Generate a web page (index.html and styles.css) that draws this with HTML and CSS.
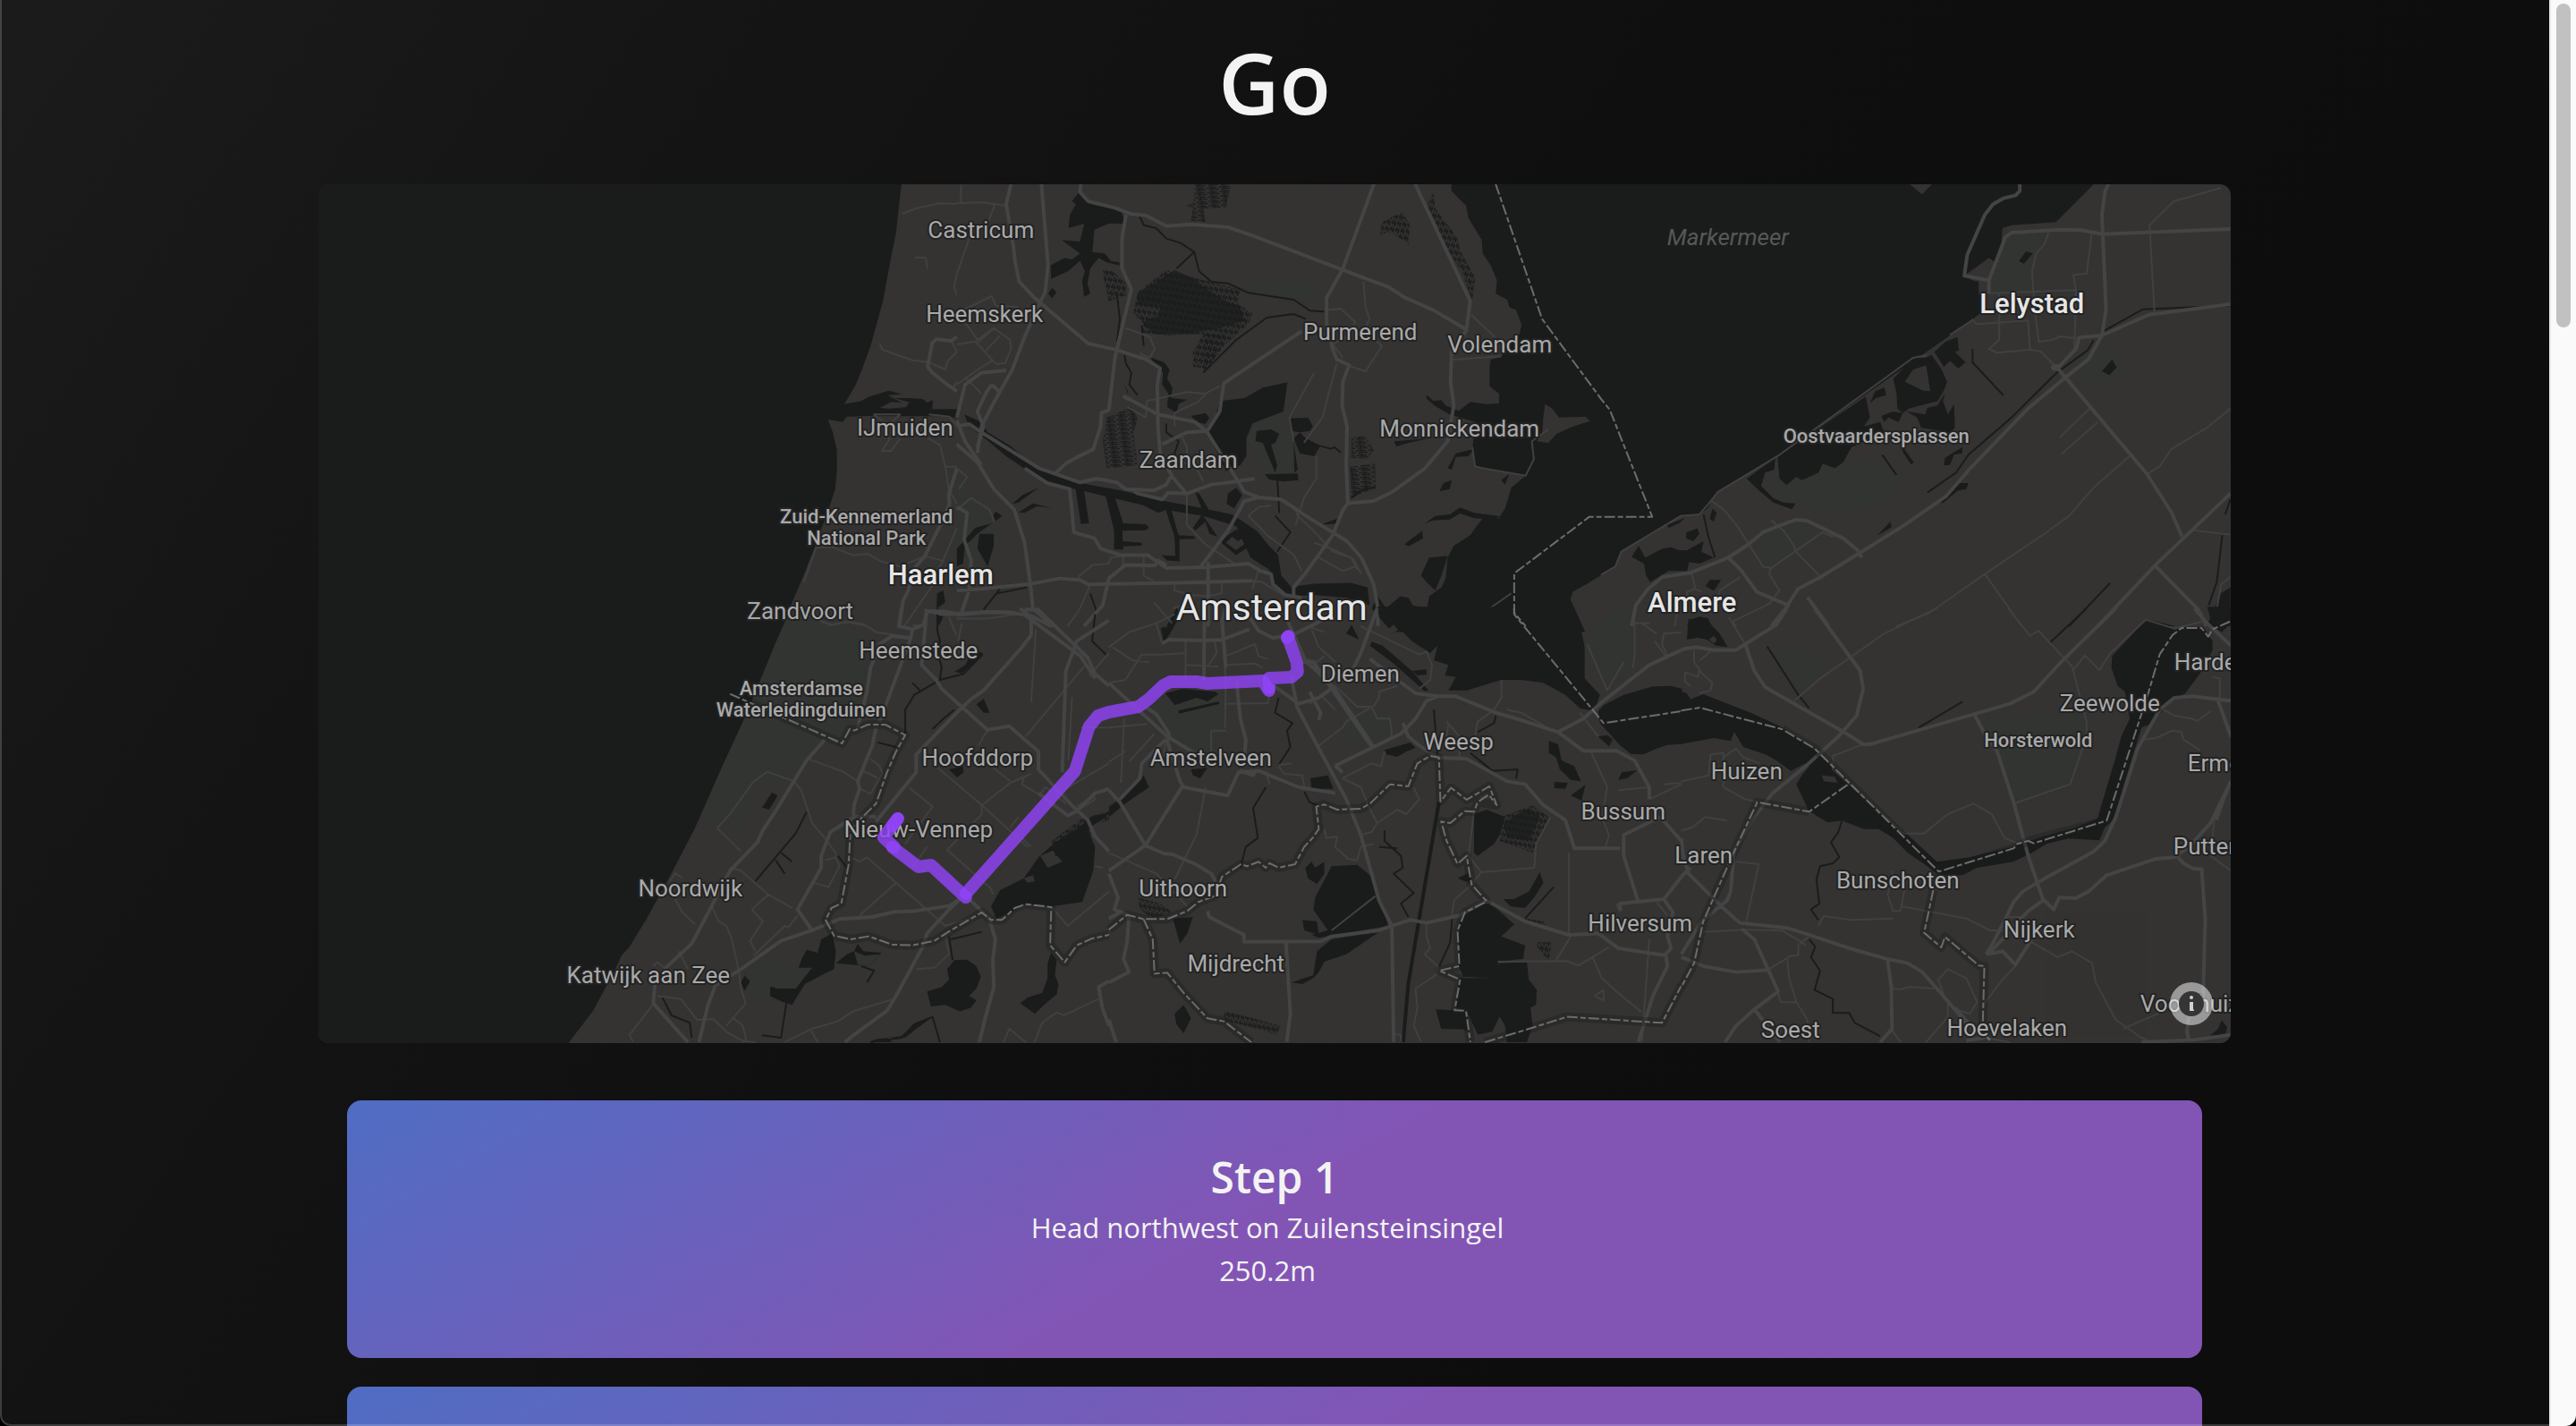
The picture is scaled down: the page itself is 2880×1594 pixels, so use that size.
FILE: index.html
```html
<!DOCTYPE html>
<html lang="en">
<head>
<meta charset="utf-8">
<title>Go</title>
<link rel="stylesheet" href="styles.css">
</head>
<body>
<div class="window">
<main class="page">
  <h1 class="title">Go</h1>
  <section class="map" aria-label="Route map">
    <svg class="map-canvas" viewBox="0 0 2138 960" preserveAspectRatio="xMidYMid slice" role="img" aria-label="Route from Nieuw-Vennep to Amsterdam">
      <defs>
        <pattern id="peat" width="13" height="22" patternUnits="userSpaceOnUse" patternTransform="rotate(12)">
          <path class="peat-line" d="M3 0V17M9 5V22M0 11H8"/>
        </pattern>
        <pattern id="peat-flat" width="30" height="15" patternUnits="userSpaceOnUse" patternTransform="rotate(-6)">
          <path class="peat-line" d="M0 4H26M6 11H30M14 0V9"/>
        </pattern>
      </defs>

      <!-- parks and dunes -->
      <g transform="translate(244 474) scale(.4082 .3333)" class="park">
        <path d="M690 0L820 40 915 90 905 230 890 390 838 450 790 435 740 510 690 570 600 600 560 760 470 700 433 740 505 540 575 355z"/>
        <path d="M560 1210L640 1180 700 1200 660 1310 590 1330z"/>
      </g>
      <g transform="translate(714 -6) scale(.4592 .3333)" class="park">
        <path d="M720 820L790 800 820 880 830 990 780 1000 740 960 710 900z"/>
        <path d="M700 350L860 330 880 400 830 410 710 385zM0 960L60 1100 110 1200 60 1280 0 1250z"/>
      </g>
      <g transform="translate(1434 -6) scale(.4592 .3333)" class="park">
        <path d="M990 185L1090 180 1060 250 1050 375 950 378 945 330zM420 960L640 940 740 1000 700 1100 520 1120 420 1060z"/>
        <path d="M1160 600L1250 560 1290 660 1180 700zM380 1190L470 1150 560 1190 470 1260 400 1300z"/>
      </g>
      <g transform="translate(884 474) scale(.4082 .3333)" class="park">
        <path d="M110 300L310 280 310 400 280 480 160 440zM640 340L760 350 780 440 700 470 640 430zM1380 0L1440 20 1440 180 1370 270 1300 120z"/>
      </g>
      <g transform="translate(1524 474) scale(.4082 .3333)" class="park">
        <path d="M820 370L1110 350 1110 430 1060 600 920 650 860 480zM250 150L330 120 400 200 330 290z"/>
      </g>

      <!-- north-west -->
      <g transform="translate(-6 -6) scale(.4592 .3333)">
        <path class="water" d="M0 0H1435L1433 18 1420 180 1404 290 1388 410 1358 560 1335 645 1322 690 1294 755 1335 745 1355 730 1402 710 1435 722 1400 725 1412 735 1450 735 1485 738 1495 750 1510 742 1508 772 1570 772V802L1520 796 1350 795 1300 797 1290 815 1254 807 1266 850 1276 910 1276 980 1272 1040 1255 1110 1222 1235 1195 1330 1167 1420 1140 1510H0z"/>
        <path class="land" d="M1408 748L1450 752 1445 765 1405 770 1380 768zM1410 733L1455 750 1440 755z"/>
        <path class="water" d="M1520 1390L1535 1380 1540 1420 1520 1440 1540 1450 1525 1500 1518 1460z"/>
        <path class="r2" d="M1435 117L1468 99 1525 82 1568 84M1466 264H1492L1497 302M1380 552L1387 573 1460 608 1498 614 1540 639 1545 612 1568 580M1568 320L1561 362 1568 390M1555 545L1568 580M1568 680L1560 700M1365 790L1400 825 1430 790H1365M1500 790L1550 797 1568 830M1385 912L1405 872 1390 845M1385 912H1408L1430 870M1497 868L1527 893 1540 965 1548 1040M1548 1040L1568 1090M1540 965H1568M1195 1353L1225 1237 1265 1235 1315 1262 1350 1257 1380 1281 1430 1300 1490 1265 1532 1280M1568 1170L1533 1285 1520 1310M1510 1360L1490 1400 1440 1500M1460 1497H1495L1490 1440M1235 1480L1260 1497 1300 1485 1350 1500"/>
        <path class="r1" d="M1568 530L1555 543 1518 538 1508 550 1497 630 1508 650 1545 690 1568 712M1568 970L1548 1060 1550 1090 1530 1155 1490 1265 1462 1310 1450 1380 1437 1415 1428 1500M1568 1460H1530L1495 1448 1490 1500"/>
      </g>

      <!-- north -->
      <g transform="translate(714 -6) scale(.4592 .3333)">
        <path class="water" d="M1204 0V40L1240 90 1245 130 1278 205 1280 250 1300 290 1315 340 1312 385 1340 405 1345 430 1362 440 1375 490 1370 520 1345 555 1325 598 1300 605 1297 630V695L1320 720V752L1290 755 1250 748 1222 778 1190 760 1180 742 1160 745 1145 725 1142 735 1165 762 1200 790 1262 815 1256 900 1262 960 1300 975 1385 995 1350 1035 1335 1105 1318 1140 1280 1140 1265 1165 1250 1195 1210 1230 1195 1270 1190 1340 1180 1370 1150 1400 1145 1440 1110 1430 1100 1405 1080 1400 1045 1440 1025 1400 1010 1440 1060 1520H1530L1494 1410 1500 1385 1575 1325V0z"/>
        <path class="land" d="M1432 755L1448 768 1466 800 1530 797 1542 812 1500 830 1460 855 1440 885 1412 880 1425 850 1428 800z"/>
        <path class="water" d="M300 40L330 85 400 105 410 150 370 150 335 170 330 245 360 250 375 275 396 280V290L365 280 345 265 325 300 318 350 325 385 310 395 305 340 312 310 300 275 270 310 230 335 228 290 262 265 280 270 300 250 275 225 255 205 300 210 310 150 272 165 275 120 290 85 280 75zM232 365L243 380 232 400 222 385z"/>
        <path class="water" d="M470 598L505 615 518 640 512 670 525 700 522 735 560 740 540 755 535 785 512 765 515 720 500 690 502 650zM570 795L605 785 615 800 605 822 585 815zM640 745L700 735 745 700 805 682 795 780 720 820 705 870 705 930 690 960 655 980 610 850 625 825zM730 845L765 840 785 855 775 885 765 890 780 960 775 985 745 885 727 880zM810 803L855 800 867 830 860 845 835 850 850 870 885 895 870 930 835 920 820 870 835 850 815 845zM750 990L830 988 832 1010 795 1015 760 1008zM820 885L830 975 822 985z"/>
        <path class="water" d="M18 790L60 815 75 850 130 895 185 960 240 990 300 1020 400 1045 505 1080 600 1105 670 1125 730 1180 760 1230 782 1260 790 1330 820 1378 830 1365 870 1358 960 1355 1000 1370 1005 1430 950 1405 870 1395 820 1400 780 1385 760 1310 715 1270 680 1165 600 1130 510 1110 490 1120 455 1095 380 1070 290 1040 230 1025 185 990 120 930 60 860 30 830z"/>
        <path class="water" d="M288 1030H308L322 1155 302 1157zM360 1050L382 1055 405 1155 460 1158 468 1170 460 1178 403 1180 404 1215 450 1220V1230L405 1232V1243H383V1180zM505 1095L520 1100 540 1195 578 1198 580 1207 542 1208V1283L512 1280 498 1262 532 1265 530 1200zM580 1050L590 1055 612 1105 600 1130 635 1200 615 1190 605 1150 580 1180 575 1170 600 1120zM680 1035L695 1060 675 1105 657 1090 660 1055zM640 1215L680 1175 705 1195 685 1215 670 1200 655 1220 680 1245 710 1215 720 1225 680 1262z"/>
        <path class="water" d="M55 1190H90V1230L75 1300 65 1275 50 1240zM85 1155L45 1170 20 1210 0 1240V1300L15 1290 20 1230 50 1190zM95 1115L110 1130 92 1150 85 1135zM150 1118L185 1088 230 1103 195 1098 165 1120zM200 1035L160 1060 135 1090 150 1085zM1140 1155L1165 1130 1200 1125 1225 1102 1260 1120 1320 1130 1315 1143 1260 1138 1225 1122 1200 1142 1160 1145zM1133 1180L1135 1205 1100 1232 1090 1225zM1195 1265L1180 1330 1165 1380 1145 1355 1130 1330 1150 1270zM1205 1010L1200 1040 1175 1048 1185 1020zM1345 990L1335 1025 1325 1010zM1260 905L1245 930 1215 932 1205 975 1195 970 1215 920zM1065 880L1150 870 1100 885 1070 898zM885 1160L925 1140 930 1155zM535 1440L545 1460 525 1500 510 1500z"/>
        <path class="peat" d="M440 380L510 305 600 340 690 370 685 420 720 450 710 485 650 560 600 650 605 520 520 525 450 515 455 485 430 450z"/>
        <path class="water-soft" d="M440 385L530 305 570 330 640 400 690 430 700 475 640 500 560 520 480 520 450 480 490 460 495 430 440 420z"/>
        <path class="peat-flat" d="M580 18H668L655 95 600 100 605 145 570 140 575 95 555 92 575 80zM365 800L425 765 440 800 430 850 440 960 365 970 355 880zM960 870L995 860 1015 910 1000 940 960 935zM957 965L1018 955 1020 1035 960 1070z"/>
        <path class="peat" d="M1160 40L1145 90 1180 210 1230 310 1255 410 1262 330 1225 240 1220 200 1165 100zM1035 145L1085 110 1103 155 1100 220 1060 180 1030 185zM355 305L380 310 412 350 412 390 370 410 360 350zM405 680L420 720 445 725 415 720zM575 580V630L610 635 640 580 655 520 600 520z"/>
        <path class="creek" d="M445 125L455 155 485 165 510 200 545 215 578 245 590 310 620 345 660 350 710 382 820 405 860 442 895 445M578 245L535 300M600 650L680 540 755 465 820 453 850 470M390 390L397 470 390 545M408 590L412 620 425 650 420 690 440 725M450 490L455 560M510 820V850L540 880 530 920 545 960M870 890L910 905 920 900 935 918M775 1130L812 1185 780 1250M325 1390L340 1450M170 1370L100 1390M65 1445L105 1375M780 1000L785 1120M960 1070L990 1040 1020 1035"/>
        <path class="r2" d="M0 82L60 78 120 90M92 88L78 140M30 200L0 320M10 20V80M0 450L45 420 85 393 95 425 150 430M0 470L25 490 50 540 90 500 130 540 132 570 118 618 95 620 68 580 45 545M0 555L45 545M0 690L50 640 85 610M68 580L105 525M20 665L60 720M90 500L50 550M410 500L470 530 482 570 470 600 445 585M820 1095L830 1130 865 1175 915 1250 960 1270 975 1310M990 345L995 430 1005 470 990 510 1035 560 995 645 950 625M895 440L935 435 970 480 950 530 915 555 940 600M1205 607L1270 600 1325 595M1252 455L1310 530M463 745L560 715 605 720 640 695M463 745L460 800M460 800L415 765M605 722L590 745 530 785 530 830M505 890L545 855 560 900 560 950M555 955L580 960 600 1015M870 650L810 800 820 880M925 618L890 800 845 885M875 930V1005L845 1070 825 1160M710 1130L735 1100 765 1095M710 1130L760 1200 790 1230 820 1260 840 1315M875 1265L940 1315 970 1300M870 1220L920 1245 965 1275 985 1325M0 970L25 1000 5 1040M0 1110L35 1070 80 1110 92 1150M295 1335L330 1295 370 1290 375 1270 400 1265M405 1265V1295M455 1265V1330L480 1350M560 1060V1160L605 1225 680 1295M530 1355V1380L570 1395 610 1400 645 1390V1350M575 1395V1420L525 1440M735 1310L720 1375M690 1350H740L800 1400M325 1360L300 1440 270 1500M0 1475H70L150 1460M480 1420L530 1500M1235 1500L1350 1390M1440 840L1400 880 1405 940 1385 995 1300 975 1262 965 1255 900"/>
        <path class="r1" d="M303 0L300 45 320 75 385 97 425 118 460 122 510 158 570 152 660 162 720 190 935 303 1050 362 1090 397 1160 440 1240 505M205 0L222 290 215 380 203 412 165 530 135 640 90 750 60 830 50 920M132 18L120 85 137 220 142 280 152 345 190 400 320 552 385 572 460 605 495 635 488 690 490 840 495 920 525 1000 550 1040 560 1060M412 120L402 200V300L425 370 402 500 385 600 370 775 352 785 350 830 332 907 290 935 265 955 240 988M1020 0L940 300 900 400V480L915 570 925 605 955 625 940 680 938 760 950 830 948 960 952 1085M1110 0L1250 410 1240 510 1205 570 1202 680 1210 760 1195 880 1140 970 1060 1050 1015 1080 952 1088 940 1110 915 1195 850 1320 820 1370V1400M0 800L20 690 60 650 120 642M85 690L105 715M85 690L70 720 50 780 65 830 50 900M0 830L30 822 60 850 200 970 300 1018 340 1005 390 1018 410 1040 480 1045 510 1025 520 1000M430 1045L440 1055 500 1075 515 1052 560 1055 620 1025 680 1015 725 1005M405 728L490 790 580 815 610 850 685 1015 700 1050 735 1068 790 1075 850 1130 950 1215 985 1270 1015 1360 1025 1440 1025 1500M840 510L650 685 640 780 610 845 560 850 500 890M735 1068L700 1080 660 1180 605 1280 590 1305M0 890L50 950 90 1040 140 1110 165 1220 180 1370 185 1440 235 1500M60 960L20 880 0 810M165 970L220 1020 275 1040 285 1185 335 1205 350 1240 400 1262 465 1262 510 1305 610 1302 710 1290 740 1315 765 1325 770 1360 800 1395 840 1405M480 1300L490 1280 510 1295M0 1380L60 1375 180 1358 250 1340 300 1345 320 1360 530 1355 720 1348M310 1500L355 1430 370 1340 410 1295 480 1297M612 1285V1500M0 1100L25 1120 18 1210 35 1280 30 1380 10 1460M0 1462L65 1452 135 1455 180 1465 230 1500M165 1445H200"/>
      </g>

      <!-- north-east -->
      <g transform="translate(1434 -6) scale(.4592 .3333)">
        <path class="water" d="M-2 0H1210L1200 18 1108 145 1000 155 978 165 975 215 960 280 945 265 885 325 905 340 920 345V385L930 400 925 450 850 525 430 930 285 1050 270 1080 260 1105 240 1125 195 1130 50 1250 35 1300-2 1327z"/>
        <path class="land" d="M752 18H806L782 52z"/>
        <path class="water" d="M1035 243L1052 250 1030 285 1018 275zM868 530L872 575 862 580 888 615 870 635 850 610 835 630 812 580 840 545zM1245 605L1256 632 1238 658 1220 645zM805 590L830 640 843 680 835 710 820 745 750 770 735 785 722 770 720 720 712 670 730 645 755 600 790 600zM690 700L695 725 670 735 655 752 668 712zM735 785L725 815 700 800 690 815 683 795 710 780zM838 718L833 745 845 790 860 755 862 835 850 850 780 835 770 800 745 780 790 790 795 768 820 760zM645 730L655 800 640 830 680 815 690 850 610 900 590 950 570 970 540 955 530 985 490 1010 475 1000 452 1027 435 1005 430 930zM425 935L422 975 400 985 390 1030 420 1070 445 1085 474 1088 465 1108 420 1085 385 1045 355 1005zM730 890L762 950 755 958 735 915zM880 900V920L860 925 850 960 835 960 838 935zM895 1020L890 1040 870 1045 830 1090 828 1075 870 1020zM272 1105L282 1120 275 1150 265 1140zM205 1137L190 1155 165 1170 160 1160zM235 1172L240 1190 225 1215 208 1205V1185zM92 1230L108 1270 150 1240 170 1235 190 1245 210 1245 250 1215 245 1250 275 1270 240 1290 215 1285 210 1315 165 1315 120 1352 110 1330 105 1290 75 1268zM705 1150L708 1168 672 1197zM293 1345L275 1382 255 1365 265 1345zM215 1480L240 1468 262 1475 265 1500H210zM1533 1370L1510 1390 1475 1500H1533zM1310 1500L1330 1477 1400 1500z"/>
        <path class="land" d="M792 625L802 712 785 710 740 680 760 640z"/>
        <path class="creek" d="M905 570V615L980 726M685 925L720 993M1200 540L1185 575 1110 650 1000 800 895 925 865 985 795 1052M1225 510L1320 437 1533 425M250 1125L262 1200 278 1270M1240 1355L1140 1500M1513 1195L1500 1350 1480 1430M1533 1075L1520 1125"/>
        <path class="r2" d="M1510 30L1395 75 1336 155 1348 450M1090 180L1080 220 1060 250 1050 310 1053 378 1060 480 1067 550M1195 185L1183 318 1150 322 1157 375 1153 580M945 383L1155 373M970 383V540L945 570 965 583 1045 572 1040 475 915 487 903 470M1067 545L1100 540 1118 528 1160 535M1045 572L1070 578 1108 630M903 475L850 523M795 590L760 600 430 930 285 1050 265 1085 240 1125 195 1130 50 1250 35 1300 0 1328M1190 770L1117 867M1210 815L1122 922M1533 770L1475 835 1390 905 1360 965 1330 990M1287 930L1200 1035 1140 1130 1085 1185 935 1325 800 1455 720 1500M935 1325L1025 1500M1440 1178L1533 1193M1533 1335L1510 1360 1500 1440M270 1080L300 1110 335 1170 395 1300 415 1305 410 1325 435 1380 410 1425 320 1485 330 1500M415 1145L445 1180 470 1230 475 1250 500 1285 540 1342M410 1310L540 1185 565 1200M222 1325L230 1375 245 1385M340 1335L290 1380 285 1410M80 1490H120M185 1460L180 1500M210 1420V1385L230 1375"/>
        <path class="r1" d="M1020 0V40L1010 55 980 65 955 85 935 120 892 255 885 325 945 340M945 385V340L985 195 1000 180 1120 170 1170 172 1220 185 1533 168M1242 0L1228 40 1220 120 1230 440 1220 525 1187 605 1132 665 1040 770 900 970 840 1065 740 1160 630 1255 535 1335 480 1375 450 1440 415 1500M1533 420L1335 455 1220 525 1165 532 1157 570 1112 635 1195 770 1330 990 1390 1120 1415 1200M1533 1055L1350 1295 1210 1500M1350 1298L1455 1445 1475 1500M75 1500L85 1430 115 1375 150 1335 220 1320 310 1270 355 1230 395 1185 440 1160 475 1143 500 1145 590 1205 625 1245 635 1270M310 1270L340 1310 380 1385 460 1432M503 1403L555 1500"/>
        <circle class="junction" cx="1108" cy="632" r="12"/>
      </g>

      <!-- south-west -->
      <g transform="translate(244 474) scale(.4082 .3333)">
        <path class="water" d="M-620-4H695L683 38 650 130 575 355 505 540 433 740 365 900 300 1045 255 1135 233 1165 210 1225 155 1350 80 1470H-620z"/>
        <path class="water" d="M645 617L661 628 637 675 618 668zM1225 303L1241 350 1225 350 1205 322zM1130 540L1168 530 1170 550 1152 567zM1222 160L1165 218 1145 212 1175 190 1185 165 1210 145 1222 150zM810 1090L820 1150 815 1210 790 1225 735 1260 700 1330 670 1318 640 1300 640 1270 700 1270 725 1180 740 1145 770 1155 780 1110zM880 1125L895 1150 945 1155 910 1200 820 1190 850 1160 870 1150zM570 1232L585 1250 570 1283 560 1255zM1125 1210L1145 1180 1180 1178 1205 1200 1217 1235 1205 1275 1185 1300 1205 1315 1190 1340 1160 1352 1120 1330 1080 1335 1070 1285 1110 1270 1130 1245zM1410 1155L1425 1180 1420 1230 1430 1260 1425 1295 1395 1325 1365 1360 1325 1325 1345 1305 1385 1290 1400 1240 1400 1190zM1568 685L1520 700 1485 735 1420 785 1375 835 1335 905 1270 945 1245 1000 1260 1040 1300 1020 1340 990 1410 1000 1495 985 1525 880 1530 800 1510 740 1568 690z"/>
        <path class="land" d="M1380 830L1415 812 1440 850 1400 870zM1335 905L1360 895 1365 915 1345 920z"/>
        <path class="park" d="M755 1205L700 1205 640 1250 655 1275 710 1275zM870 1150L900 1165 940 1160 910 1200 880 1195z"/>
        <path class="peat" d="M1410 780L1500 700 1520 730 1510 830 1420 830zM1510 700L1568 680V715L1520 720z"/>
        <path class="creek" d="M1098 20V75L1105 110 1100 160 1110 195 1105 240 1035 290 1010 340V420M1145 340L1115 370 1085 405M1030 250L1050 275M1222 155L1170 220 1105 240M740 683L710 755 600 915M670 820L700 850M655 845L680 890M935 450L985 465M1220 1085L1135 1110M1130 1100L1140 1180M890 1200L925 1215 905 1255M685 1320L670 1440 618 1432M820 820L850 870M345 1305L370 1365 420 1390 425 1440M915 1455L1000 1440 1035 1395 1085 1370 1105 1455M1530 20L1522 110 1560 155"/>
        <path class="water" d="M960 1440L975 1455H910L930 1445 1000 1435 1040 1390 1080 1375 1040 1410 1010 1440z"/>
        <path class="r2" d="M780 45L810 55 860 45 900 55 930 80 975 88M1150 90L1130 30M1165 50L1155 110M1120 15L1300 10M745 505L840 548 880 580M915 505L940 530 948 555 915 622 885 605M895 545L935 570M495 737L530 690 595 580 632 548 705 580 725 610 755 720 790 770 825 830M495 737L560 815M1095 530L1220 660 1345 800M1020 600L1085 665 1010 790M1210 460L1230 420 1240 410M1220 660V690L1125 810 1245 940 1250 960M1355 555L1298 585 1220 660M1225 510L1298 580M905 835L985 920 1120 1065M985 920L885 1030M905 835L885 850 870 840 850 845M1070 800L1030 870M1298 735L1320 700M1355 800L1330 770M365 915L380 888 400 905M380 975L400 1020 435 1060M530 870L560 880 635 960 700 1005M635 960L590 1010 620 1050 585 1115 600 1150M555 1220L535 1110 520 1065 500 1050 480 1000M390 1150L415 1210M320 1200L330 1187 360 1215M715 1030L690 1070 680 1065 595 1165M790 845L820 835 830 865 800 935 760 920M1490 400H1568M1355 315L1368 70M1340 430L1500 195M1568 150L1515 225M1457 510L1467 300M1450 605L1568 520M1335 565L1330 590 1378 625M1378 625L1395 600 1450 655M1480 680L1530 640 1525 630 1480 665M1550 870L1530 865M555 1220L560 1275 573 1325 520 1400M330 1300L395 1310 440 1380 485 1378 520 1420 570 1455M325 1320L255 1430 265 1455M560 1450L600 1455M750 1410L770 1455M680 1455L755 1410 825 1385 870 1350 980 1310M540 1375L565 1400 575 1450M1040 1210L1090 1205 1130 1160 1120 1095M1120 1065L1190 1040M1410 1000L1455 1065 1568 950M1365 1455L1385 1390 1425 1355 1445 1365 1540 1310M1280 1455L1295 1410 1340 1455"/>
        <path class="r1" d="M1000 0L992 60 1030 70 1060 55 1070 10 1110 10 1160 20 1250 12 1310 15M1065 60L1055 190 1095 240 1110 270 1235 407 1295 395 1375 480V540L1420 600 1470 665 1510 710 1530 765 1568 815M1030 70L1025 100 940 380M1025 100L975 92 940 120 915 200 905 280 880 400M930 400L920 460 880 580 885 605 870 660 868 695M790 440L740 510 650 690 620 745 605 785 530 880 475 1010 425 1125 350 1210M325 1250L320 1325 415 1455M1325 0L1355 30V90L1330 130 1225 275 1190 305 1155 345 1040 490V550L930 715M1370 0L1510 165 1530 220 1568 260M1568 40L1480 110 1450 210 1440 550M1335 20L1490 160 1530 235M930 700L900 695 870 700 805 750 780 830 780 870 715 1010 755 1080M445 1455L470 1330 490 1265 560 1210 670 1115 755 1080 830 1042 920 1035 980 1018 1030 1016 1130 998 1160 975M845 1455L870 1430 960 1350 985 1300 1025 1210 1060 1130 1070 1090 1130 1010 1160 975M1185 975L1240 1040 1257 1110 1250 1180 1253 1270 1230 1370 1213 1455M1568 1250L1540 1270 1550 1340 1568 1400M1568 605L1530 620 1480 680 1455 695 1375 620"/>
        <path class="border-shade" d="M530 287L837 453 858 405 870 410 908 390H955L1010 425 985 480 960 550 930 655 893 700 860 745 855 860 835 990 808 1005 792 1045 815 1098 860 1110 910 1100 975 1128 1030 1130 1090 1115 1135 1080 1220 1020 1245 1045 1275 1045 1310 1005 1340 992 1410 1002 1407 1130 1447 1187 1480 1130 1520 1108 1568 1095"/>
        <path class="border" d="M530 287L837 453 858 405 870 410 908 390H955L1010 425 985 480 960 550 930 655 893 700 860 745 855 860 835 990 808 1005 792 1045 815 1098 860 1110 910 1100 975 1128 1030 1130 1090 1115 1135 1080 1220 1020 1245 1045 1275 1045 1310 1005 1340 992 1410 1002 1407 1130 1447 1187 1480 1130 1520 1108 1568 1095"/>
      </g>

      <!-- south -->
      <g transform="translate(884 474) scale(.4082 .3333)">
        <path class="water" d="M735-5L740 30 780 85 790 60 830 110 880 150 900 125 890 175 930 190 920 225 950 230 930 275 980 275 1020 260 1075 240 1130 240 1190 250 1250 290 1290 335 1330 345 1345 290 1303 235V130L1290 50 1272-5zM1355 325L1410 290 1490 262 1540 260 1570 270V455L1530 458 1500 470 1465 490 1430 488 1400 460 1345 385 1340 345z"/>
        <path class="land" d="M765 70L780 55 792 72 775 88z"/>
        <path class="water" d="M200 15L165 90 150 115 142 65 170 60 185 0zM665 55L685 105 650 85zM720 112L750 125 830 210 875 275 865 278 780 185 715 125zM830 210L870 205V222L845 225zM155 285L200 270 290 280 300 288 270 312 240 300 180 325zM190 343L300 313 303 320 192 353zM755 475L825 450 840 468 815 480 790 498 760 490zM1205 445L1230 455 1240 510 1275 530 1293 580 1265 575 1235 540 1225 500 1205 485zM1220 582L1257 585 1250 605 1220 603zM1305 592L1295 645 1265 628zM1395 575L1405 550 1447 543 1420 570zM1340 430L1365 425 1380 440 1370 463zM552 570L600 560 615 605 555 605zM225 540L270 535 250 570 230 560zM95 560L110 600 50 650 0 700V665L30 640z"/>
        <path class="water" d="M555 850L565 870 590 850 590 890 570 925 545 905 538 870zM610 865L680 860 725 905 765 1065 600 1100 575 1105 555 1095 600 1080 560 1010 565 970zM530 1045L570 1050 575 1095 535 1080zM740 1085L650 1160 590 1185 575 1220 560 1240 530 1260 500 1255 560 1230 570 1150 610 1110zM1000 690L1035 675 1085 700 1070 760 1055 790 1010 830 1000 820V760zM975 1010L1035 985 1060 1005 1110 1060 1075 1100 1140 1130 1135 1175 1070 1185 1050 1240 970 1235 955 1190 960 1050zM960 1240L1045 1240 1070 1190 1145 1185 1150 1245 1172 1280 1170 1330 1155 1340 1160 1400 1145 1455 1090 1455 1085 1400 1070 1370 1050 1420 1010 1430 980 1350 950 1340zM895 1345L980 1350 985 1420 970 1412 910 1410zM1180 885L1190 920 1165 970 1140 1005 1100 1000 1080 975 1110 975 1150 950zM205 1330L225 1375 205 1425 185 1395 180 1360zM175 1040L230 1035 215 1090 195 1125zM990 885L995 925 955 905z"/>
        <path class="peat" d="M1075 700L1160 660 1205 700 1160 820 1070 780zM80 970L140 990 175 1020 120 1040 85 1010zM320 1350L470 1400 460 1430 360 1395 310 1380zM1170 1120H1212L1205 1180 1175 1140zM1140 1040L1190 1050 1195 1065 1150 1060z"/>
        <path class="water-soft" d="M1080 720L1150 670 1180 700 1150 780 1090 770z"/>
        <path class="creek" d="M465 300L455 350 503 385 488 410 497 465 465 525M430 600L395 670 408 770 375 800 360 870M890 340L900 490M1060 360L1055 385 1010 415M1050 545L1120 540 1115 570M990 485L1020 515 1050 545M755 745V780L800 830 805 870 780 890 835 955 800 990 820 1035M600 1085L730 960M1218 935L1140 1040M535 615L550 650 570 660M940 1040L935 1120 905 1200M740 800L790 805"/>
        <path class="canal" d="M904 650L850 1040 820 1260 806 1455"/>
        <path class="r2" d="M0 130L55 80 130 50 145 115M130 50L180 20M0 250L45 240 90 155 145 155 210 150M10 130L65 175 110 180M210 110V190L300 195M315 110L320 250 318 400M210 240V190M320 160L400 120 410 160 435 170M290 110L295 150 270 195M320 190L400 185 420 200M320 320L435 318 440 290M280 410H320M280 410V490M0 400L105 388M42 370L33 585M0 515L45 480M55 515L125 420M155 440L150 500M555 70L575 130 620 180M590 80L555 65M540 170L570 180 590 160M550 320L580 290 620 340M0 820L130 890 215 1000M265 600L240 760 180 910M500 520L465 525M465 530L480 555 530 560 535 600M430 545L440 590M690 60L850 155 870 145 885 190 880 240 850 270M620 260L680 330 720 330 735 370 770 370 775 420 770 440M725 330L740 300 740 280 790 260M570 465L640 400 650 380 715 335M640 570L720 520 745 530 755 480M640 570L690 600 710 660 735 720 720 750 690 760M735 720L790 675 815 690 850 640 835 600M925 380L960 430M925 430L930 385M960 430V500M1055 340L1010 380 1000 450M1075 240V300L1055 340M1090 340L1130 350 1200 400M1410 180L1365 275M1310 120L1365 275M1320 480L1365 600 1350 700 1370 760 1360 800M1395 610L1480 600M1520 590L1568 585M1480 640L1568 590M1210 700L1170 790 1165 870 1020 885M1000 680L985 830 1020 885 990 930 945 980 940 1030M1260 820V1090M1265 1100L1225 1180M1065 1185L1255 1183 1285 1198 1325 1170 1370 1135M1325 1170L1350 1240 1395 1290 1460 1355M1480 1110L1460 1455M870 1060L870 1100 880 1140 865 1160 900 1200 895 1230 840 1275 845 1340 835 1400 855 1455M780 1430H800V1455M1330 1300L1355 1280V1315L1330 1300M590 740L595 770 625 765 620 800 655 840 680 845 690 800 725 790M1400 1015L1390 990M1440 40V160L1435 200M1495 110L1525 160M1568 80L1520 85 1515 120 1530 160M1460 50L1500 85M1290 350L1340 430M1500 985L1530 1030M610 1080L730 965"/>
        <path class="r1" d="M145 118L165 105 260 108 310 105 385 70M262 0L260 240M320 0L310 40 320 200M385 30L410 75 450 100 510 85 560 55 600 30M735 0L690 150 670 200M485 30L540 180 560 200 615 265 725 465M435 245L520 320 575 300 620 260M500 230L515 330 575 470 650 640 690 760 740 980 775 1065 780 1455M350 250L360 370 375 440 370 530M0 250L160 430 200 460 240 490M100 330L130 355 165 420 160 445 195 580 205 600 325 628 355 550 410 545 520 600 620 620M0 610L30 650 100 795 205 590M30 640L85 570 90 520 155 440M0 880L100 795 150 822 175 825 240 860 280 890 295 920M0 890L25 970 15 1010 55 1030 50 1120 40 1175 55 1220 0 1255M270 1015L275 1035 370 1095V1118L580 1117 610 1100 740 1080 775 1065 825 1045 870 1055 960 1030 1035 980 1140 1050 1260 1095 1340 1090 1395 1140 1530 1165M485 1120L497 1360 487 1455M0 1380L20 1455M0 1040L30 1020M620 528L725 465 800 420 840 370 870 310 900 295 950 295 1060 350 1130 375 1230 415 1300 478 1390 478 1440 510 1480 600V640M715 170L790 240 840 285 900 295M1230 415L1300 370 1345 320 1480 190 1568 140M805 385L820 430 850 460 900 500 980 505 1040 545 1090 580 1140 590 1190 660 1250 710 1275 805 1400 805M1510 700L1410 760V830L1450 985M1510 700L1568 780M1400 1015V990L1520 975 1568 900M1520 975L1545 1020 1530 1100 1540 1140 1525 1160 1530 1200 1490 1300 1450 1455M640 550L620 528M360 545L395 560 400 545M550 280L580 350 575 375M530 180H560L720 465"/>
        <path class="border-shade" d="M0 1078L50 1028 95 1042 160 1042 215 1015 245 985 290 965 310 900 362 858 378 865 410 850 430 870 440 855 465 870 510 858 535 800 558 770 575 740 568 665 590 658 625 675 690 672 715 655 770 590 820 597 845 520 880 495 904 500 908 648 937 602 980 642 1042 597 1062 660 1010 650 1000 682 975 680 935 720 910 715 925 780 955 857 980 830 993 925 1035 983 975 1020 955 1080 960 1200 905 1215 962 1245 947 1348 978 1350 990 1455M95 1042L120 1110 125 1225 160 1222 205 1290 270 1375 315 1385 390 1455M1030 1455L1130 1418 1255 1370 1515 1390 1568 1265"/>
        <path class="border" d="M1110 0V20L1355 385 1568 345M0 1078L50 1028 95 1042 160 1042 215 1015 245 985 290 965 310 900 362 858 378 865 410 850 430 870 440 855 465 870 510 858 535 800 558 770 575 740 568 665 590 658 625 675 690 672 715 655 770 590 820 597 845 520 880 495 904 500 908 648 937 602 980 642 1042 597 1062 660 1040 625 1010 650 1000 682 975 680 935 720 910 715 925 780 955 857 980 830 993 925 1035 983 975 1020 955 1080 960 1200 905 1215 962 1245 947 1348 978 1350 990 1455M95 1042L120 1110 125 1225 160 1222 205 1290 270 1375 315 1385 390 1455M1030 1455L1130 1418 1255 1370 1515 1390 1568 1265"/>
      </g>

      <!-- south-east -->
      <g transform="translate(1524 474) scale(.4082 .3333)">
        <path class="water" d="M-2 278L15 285 25 305 60 288 190 350 270 395 370 480 470 600 620 760 700 850 790 835 905 800 990 765 1080 735 1140 705 1165 600 1185 520 1205 430 1228 370 1215 280 1195 260 1178 200 1180 160 1272 38 1355 68 1370 62H1430L1455 110V140L1420 220 1380 285 1330 320 1290 385 1260 400 1240 480 1210 600 1190 700 1160 735 1145 778 1060 772 1000 790 960 820 910 850 810 870 770 895H705L680 870 620 820 580 770 540 740H500L440 712 400 718 350 680 330 630 315 590 330 560 350 530 340 520 300 545 260 510 230 490 170 465 145 415 135 445 90 435-2 455zM1440-5H1505V50L1480 80 1455 60zM20 35L45 45 70 30 85 60 105 85 127 130 95 125 70 105 45 98 15 105zM1480 1382L1495 1405 1490 1430 1445 1437 1470 1410z"/>
        <path class="land" d="M385 560L420 565 428 585 390 580zM88 92L98 105 90 118 75 105z"/>
        <path class="creek" d="M235 128L320 290 350 335M770 313L650 400M1110 0L1010 115M440 712L430 750 410 785 433 835 415 855 380 865 370 910 378 990 355 1010 375 1045M350 1110L367 1135 355 1170 380 1215 365 1280 415 1310V1357H460L475 1390 545 1435"/>
        <path class="r2" d="M700 0L555 85 380 235 310 310M500 455L415 495V540L610 755 665 755 730 690 800 655 850 690 885 770 925 790M895 0L955 92 978 75 1070 195 1110 380V430L1065 590 910 655M1075 205L1105 158 1145 207 1175 150 1272 38 1350 68 1425 45M35 140V180L50 205 45 230 10 215 10 245 25 260M50 210L85 250 80 275 50 285M50 175L80 145M130 30L175 120M0 580L75 560 80 490 115 485V600L175 640 210 650M115 500L150 470 170 500 215 520M0 745L30 735 65 700 125 712M150 850L212 858 178 1050M60 1085L170 1078 275 1080 330 1120 340 1130M240 1210L300 1165H320V1130L350 1100M290 1170L295 1240 315 1320 345 1380 350 1455M375 1065L390 1032 465 1045 580 1040M605 1000L780 1040 845 1080H880M580 880L565 960 580 1015H600L612 940M265 1290L272 1320 315 1322M575 1275L600 1278 625 1270 695 1275M700 1250L730 1210 780 1240 810 1320 790 1360 750 1345 720 1300 705 1250M575 1410L600 1455M670 1455L730 1370V1310M960 1120L1030 1170 1070 1150 1125 1190 1135 1255 1190 1380 1260 1440 1280 1450M830 1325L880 1245 915 1200M890 1035L940 1035M1210 1410L1380 1320M1320 340L1350 360 1400 370 1412 378 1450 345M1265 440L1300 435 1345 410 1370 415 1375 440 1420 475M1455 230L1475 235V300M1460 710L1450 830 1505 880M830 1440L900 1455"/>
        <path class="r1" d="M290 0L260 55 175 120 150 140 90 140 40 130 0 138M365 0L490 210 498 270 480 360 430 430 340 530 250 620 200 700 145 810 135 950 125 980 55 1050 0 1160M175 120L200 210 230 265 445 415 500 457 520 455 900 320 965 280 1040 180 1190 0M805 360L830 420 865 480 910 650 950 830 990 975 1020 1010 1035 970 1080 972 1115 950 1165 895 1300 840 1350 835 1390 800 1450 720 1505 580M1405 0L1440 50 1505 125M1505 310L1470 305 1400 295 1350 300 1310 340 1250 470 1190 700 1160 780 1130 815 975 920 935 950 910 985 880 1060 850 1130 835 1160M990 980L950 1015 915 1060 895 1090 840 1160 880 1150 915 1195 960 1110M0 770L5 830 20 890 110 1000 160 1055 290 1072 350 1095 460 1140 560 1175 620 1190 660 1220 700 1275 780 1390M0 1170L60 1200 150 1220 240 1213M165 1075L200 1110 265 1285 200 1345 150 1400 120 1455M200 1345L270 1455M565 1180L575 1270 577 1410 545 1455M1470 310L1505 430M1425 870L1430 960 1435 1040 1428 1340 1390 1370 1385 1420 1390 1450M1360 835L1375 855 1400 872 1428 875M1260 1455L1400 1448 1505 1430M1505 580L1485 640 1465 710M830 1440L780 1450M750 1340L800 1410M0 900L25 870"/>
        <path class="border-shade" d="M275 405L365 470 705 883 910 805 950 780 1165 712 1260 355M350 682L208 650 145 815 60 1050 35 1190 0 1270M690 945L665 1088 712 1137 722 1102 815 1198 830 1200 825 1420"/>
        <path class="border" d="M0 343L50 333 275 405 365 470 705 883 910 805 920 790 950 780 965 788 1165 712 1260 355 1280 280 1310 155 1345 90 1370 66H1425L1443 95 1455 70 1505 43M455 592L350 682 208 650 145 815 60 1050 35 1190 0 1270M690 945L665 1088 712 1137 722 1102 815 1198 830 1200 825 1420 850 1455"/>
      </g>
      <g transform="translate(714 -6) scale(.4592 .3333)">
        <path class="border" d="M1312 18L1425 470 1568 737 1590 775 1693 1133 1540 1133 1357 1323V1455L1385 1500"/>
      </g>

      <!-- place names -->
      <g class="place">
        <text x="741" y="60">Castricum</text>
        <text x="745" y="154">Heemskerk</text>
        <text x="656" y="281">IJmuiden</text>
        <text x="539" y="486">Zandvoort</text>
        <text x="1165" y="174">Purmerend</text>
        <text x="1321" y="188">Volendam</text>
        <text x="1276" y="282">Monnickendam</text>
        <text x="973" y="317">Zaandam</text>
        <text x="671" y="530">Heemstede</text>
        <text x="737" y="650">Hoofddorp</text>
        <text x="671" y="730">Nieuw-Vennep</text>
        <text x="416" y="796">Noordwijk</text>
        <text x="369" y="893">Katwijk aan Zee</text>
        <text x="1165" y="556">Diemen</text>
        <text x="998" y="650">Amstelveen</text>
        <text x="1275" y="632">Weesp</text>
        <text x="1459" y="710">Bussum</text>
        <text x="967" y="796">Uithoorn</text>
        <text x="1026" y="880">Mijdrecht</text>
        <text x="1478" y="835">Hilversum</text>
        <text x="1597" y="665">Huizen</text>
        <text x="1549" y="759">Laren</text>
        <text x="1766" y="787">Bunschoten</text>
        <text x="1924" y="842">Nijkerk</text>
        <text x="2003" y="589">Zeewolde</text>
        <text x="1646" y="954">Soest</text>
        <text x="1888" y="952">Hoevelaken</text>
        <text class="from-left" x="2075" y="543">Harderwijk</text>
        <text class="from-left" x="2090" y="656">Ermelo</text>
        <text class="from-left" x="2074" y="749">Putten</text>
        <text class="from-left" x="2037" y="925">Voorthuizen</text>
      </g>
      <g class="place nature">
        <text x="613" y="379">Zuid-Kennemerland</text>
        <text x="613" y="403">National Park</text>
        <text x="540" y="571">Amsterdamse</text>
        <text x="540" y="595">Waterleidingduinen</text>
        <text x="1742" y="289">Oostvaardersplassen</text>
        <text x="1923" y="629">Horsterwold</text>
      </g>
      <g class="place city">
        <text x="696" y="447">Haarlem</text>
        <text x="1916" y="144">Lelystad</text>
        <text x="1536" y="478">Almere</text>
        <text class="capital" x="1066" y="487">Amsterdam</text>
      </g>
      <text class="lake" x="1576" y="68">Markermeer</text>

      <!-- planned route -->
      <g class="route">
        <path d="M648 709L632 730 644 741"/>
        <path d="M648 709L642 717"/>
        <path d="M642 741L671 763 685 761 724 797"/>
        <path d="M724 793L846 656 852 637 862 606 872 594 884 590 917 584 929 575 945 560 953 556H982L994 558 1056 555 1063 566"/>
        <path d="M1063 563L1063 552 1088 551 1095 545 1094 534 1084 506"/>
        <path d="M1083 507L1085 505"/>
      </g>
    </svg>
    <button class="map-info" type="button" aria-label="Map attribution">
      <svg class="map-info-icon" viewBox="0 0 48 48" aria-hidden="true">
        <circle class="map-info-disc" cx="24" cy="24" r="14"/>
        <circle class="map-info-mark" cx="24" cy="17" r="2"/>
        <path class="map-info-mark" d="M22 22h4v8q1 0 1 2h-5z"/>
      </svg>
    </button>
  </section>

  <ol class="steps">
    <li class="step">
      <h2 class="step-title">Step 1</h2>
      <p class="step-text">Head northwest on Zuilensteinsingel</p>
      <p class="step-text">250.2m</p>
    </li>
    <li class="step">
      <h2 class="step-title">Step 2</h2>
    </li>
  </ol>
</main>
<div class="scrollbar" aria-hidden="true"><div class="scrollbar-thumb"></div></div>
</div>
</body>
</html>
```
FILE: styles.css
```css
* {
  box-sizing: border-box;
  margin: 0;
  padding: 0;
}

html {
  background: #000;
}

.window {
  position: relative;
  display: grid;
  grid-template-columns: 1fr 30px;
  height: 100vh;
  overflow: hidden;
  border-radius: 0 0 12px 12px;
}

/* hairline round the window frame */
.window::after {
  content: "";
  position: absolute;
  inset: 0;
  border: solid rgba(255, 255, 255, .18);
  border-width: 0 0 2px 2px;
  border-radius: 0 0 12px 12px;
  pointer-events: none;
}

.page {
  min-width: 0;
  overflow: hidden;
  background: linear-gradient(125deg, #1b1b1b 0%, #131313 28%, #0f0f0f 50%, #0d0d0d 80%);
  color: #f3f3f3;
  font-family: "Open Sans", "Noto Sans", sans-serif;
  text-align: center;
}

.title {
  padding: 28px 0 50px;
  font-size: 94px;
  font-weight: 600;
  line-height: 128px;
}

.map {
  position: relative;
  width: 75%;
  height: 960px;
  margin: 0 auto 64px;
  overflow: hidden;
  border-radius: 12px;
  background: #343332;
}

.map-canvas {
  display: block;
  width: 100%;
  height: 100%;
}

.water { fill: #1a1c1b; }
.water-soft { fill: #1a1c1b; opacity: .7; }
.land { fill: #343332; }
.park { fill: #323431; }
.peat { fill: url(#peat); }
.peat-flat { fill: url(#peat-flat); }
.peat-line { fill: none; stroke: #1a1c1b; stroke-width: 4; }

.creek, .canal, .r1, .r2, .border, .border-shade {
  fill: none;
  stroke-linejoin: round;
  vector-effect: non-scaling-stroke;
}

.creek { stroke: #1a1c1b; stroke-width: 2; }
.canal { stroke: #1a1c1b; stroke-width: 4; }
.r1 { stroke: #444; stroke-width: 4; }
.r2 { stroke: #404040; stroke-width: 2; }
.junction { fill: #444; }
.border { stroke: #6c6c6c; stroke-width: 2; stroke-dasharray: 12 3 6 3; }
.border-shade { stroke: #1a1c1b; stroke-width: 10; opacity: .35; }

.place text {
  fill: #a9a9a9;
  stroke: #232323;
  stroke-width: 4;
  stroke-linejoin: round;
  paint-order: stroke;
  font: 400 26px Roboto, sans-serif;
  text-anchor: middle;
}

.place .from-left { text-anchor: start; }

.nature text {
  font-size: 22px;
  font-weight: 500;
}

.city text {
  fill: #e6e6e6;
  font-size: 31px;
  font-weight: 500;
}

.city .capital {
  font-size: 41px;
  font-weight: 400;
}

.lake {
  fill: #565857;
  font: italic 400 26px Roboto, sans-serif;
  text-anchor: middle;
}

.route path {
  fill: none;
  stroke: #9244fb;
  stroke-width: 14;
  stroke-linecap: round;
  stroke-linejoin: round;
  opacity: .8;
}

.map-info {
  position: absolute;
  right: 20px;
  bottom: 20px;
  width: 48px;
  height: 48px;
  border: 0;
  border-radius: 50%;
  background: rgba(255, 255, 255, .5);
  cursor: pointer;
}

.map-info-icon {
  display: block;
  width: 100%;
  height: 100%;
}

.map-info-disc { fill: #353535; }
.map-info-mark { fill: #d0d0d0; }

.steps {
  display: grid;
  gap: 32px;
  width: 75%;
  margin: 0 auto;
  padding: 0 32px;
  list-style: none;
}

.step {
  min-height: 288px;
  padding: 54px 64px 72px;
  border-radius: 16px;
  background: linear-gradient(150deg, #4f6dc3 0%, #8255b5 48%);
}

.step-title {
  font-size: 48px;
  font-weight: 600;
  line-height: 64px;
}

.step-text {
  padding-right: 16px;
  font-size: 31px;
  line-height: 48px;
}

.scrollbar {
  padding: 4px 6px;
  border-left: 2px solid #e8e8e8;
  background: #fafafa;
}

.scrollbar-thumb {
  width: 16px;
  height: 362px;
  border-radius: 8px;
  background: #c1c1c1;
}
```
